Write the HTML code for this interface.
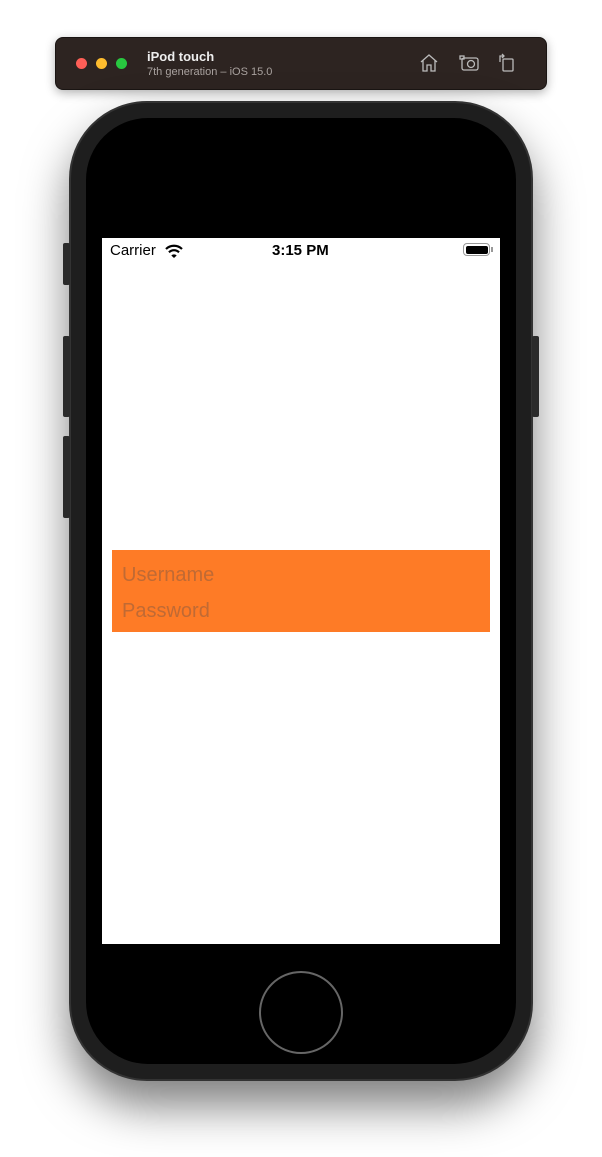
<!DOCTYPE html>
<html><head><style>
body{margin:0;width:602px;height:1157px;background:#fff;position:relative;overflow:hidden;font-family:"Liberation Sans",sans-serif}
div{position:absolute;box-sizing:border-box}
</style></head><body>
<div style="left:55px;top:37px;width:492px;height:53px;background:#2d2421;border-radius:8px;box-shadow:0 3px 10px rgba(0,0,0,.3);border:1px solid #1a1513"></div>
<div style="left:76px;top:58px;width:11px;height:11px;border-radius:50%;background:#fe5f57"></div>
<div style="left:96px;top:58px;width:11px;height:11px;border-radius:50%;background:#febc2e"></div>
<div style="left:116px;top:58px;width:11px;height:11px;border-radius:50%;background:#28c840"></div>
<div style="left:147px;top:49px;color:#eee;font-weight:bold;font-size:13px">iPod touch</div>
<div style="left:147px;top:66px;color:#a9a29f;font-size:11px">7th generation – iOS 15.0</div>
<svg style="position:absolute;left:418px;top:52px" width="100" height="22" fill="none" stroke="#bbb" stroke-width="1.3">
<path d="M3 10 L11 3 L19 10 M5 8 V19 H9 V13 H13 V19 H17 V8"/>
<rect x="44" y="6" width="16" height="12" rx="2"/><rect x="42" y="4" width="4" height="3"/><circle cx="53" cy="12" r="3.5"/>
<rect x="85" y="7" width="10" height="12" rx="1"/><path d="M82 10 V4 H86 M84 2 L86 4 L84 6"/>
</svg>
<div style="left:69px;top:101px;width:464px;height:980px;background:#1e1e1e;border-radius:78px;box-shadow:0 25px 45px rgba(0,0,0,.5);border:2px solid #333"></div>
<div style="left:63px;top:243px;width:7px;height:42px;background:#2a2a2a;border-radius:2px"></div>
<div style="left:63px;top:336px;width:7px;height:81px;background:#2a2a2a;border-radius:2px"></div>
<div style="left:63px;top:436px;width:7px;height:82px;background:#2a2a2a;border-radius:2px"></div>
<div style="left:532px;top:336px;width:7px;height:81px;background:#2a2a2a;border-radius:2px"></div>
<div style="left:86px;top:118px;width:430px;height:946px;background:#000;border-radius:62px"></div>
<div style="left:102px;top:238px;width:398px;height:706px;background:#fff"></div>
<div style="left:110px;top:242px;font-size:15px;color:#000">Carrier</div>
<svg style="position:absolute;left:164px;top:243px" width="20" height="16"><path d="M2 6 A11.5 11.5 0 0 1 18 6" stroke="#000" stroke-width="2.2" fill="none"/><path d="M5 9.3 A7 7 0 0 1 15 9.3" stroke="#000" stroke-width="2.2" fill="none"/><path d="M7.3 12.5 L10 15 L12.7 12.5 A3.8 3.8 0 0 0 7.3 12.5Z" fill="#000"/></svg>
<div style="left:272px;top:242px;font-size:15px;font-weight:bold;color:#000">3:15 PM</div>
<div style="left:463px;top:243px;width:27px;height:13px;border:1px solid #999;border-radius:4px;padding:1.5px"><div style="position:static;width:100%;height:100%;background:#000;border-radius:2px"></div></div>
<div style="left:491px;top:247px;width:2px;height:5px;background:#999"></div>
<div style="left:112px;top:550px;width:378px;height:82px;background:#fe7b26"></div>
<div style="left:122px;top:564px;font-size:20px;color:#c06a34">Username</div>
<div style="left:122px;top:600px;font-size:20px;color:#c06a34">Password</div>
<div style="left:259px;top:971px;width:84px;height:83px;border:2px solid #666;border-radius:50%"></div>
</body></html>
